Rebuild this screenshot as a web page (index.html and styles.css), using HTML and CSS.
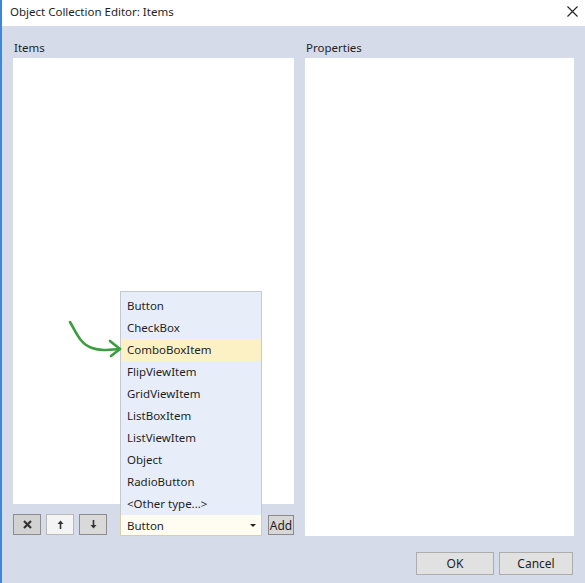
FILE: index.html
```html
<!DOCTYPE html>
<html lang="en">
  <head>
    <meta charset="UTF-8" />
    <title>Object Collection Editor: Items</title>
    <link rel="stylesheet" href="styles.css">
  </head>
  <body>
    <div class="window">
      <div class="titlebar">
        <span class="title">Object Collection Editor: Items</span>
        <svg class="close" width="11" height="11" viewBox="0 0 11 11">
          <path d="M0.5 0.5 L10.5 10.5 M10.5 0.5 L0.5 10.5" stroke="#222" stroke-width="1.1" fill="none" />
        </svg>
      </div>

      <div class="content">
        <div class="panes">
          <div class="pane pane-items">
            <div class="pane-label">Items</div>
            <div class="listbox"></div>

            <div class="toolbar">
              <button class="tool tool-remove" type="button">
                <svg width="9" height="9" viewBox="0 0 9 9">
                  <path d="M1 1 L8 8 M8 1 L1 8" stroke="#333" stroke-width="2.2" fill="none" />
                </svg>
              </button>
              <button class="tool tool-light" type="button">
                <svg width="7" height="9" viewBox="0 0 7 9">
                  <path d="M3.5 9 V2" stroke="#333" stroke-width="1.6" fill="none" />
                  <path d="M0.5 4 L3.5 0.5 L6.5 4 Z" fill="#333" />
                </svg>
              </button>
              <button class="tool" type="button">
                <svg width="7" height="9" viewBox="0 0 7 9">
                  <path d="M3.5 0 V7" stroke="#333" stroke-width="1.6" fill="none" />
                  <path d="M0.5 5 L3.5 8.5 L6.5 5 Z" fill="#333" />
                </svg>
              </button>

              <div class="combo">
                <ul class="dropdown">
                  <li>Button</li>
                  <li>CheckBox</li>
                  <li class="selected">ComboBoxItem</li>
                  <li>FlipViewItem</li>
                  <li>GridViewItem</li>
                  <li>ListBoxItem</li>
                  <li>ListViewItem</li>
                  <li>Object</li>
                  <li>RadioButton</li>
                  <li>&lt;Other type...&gt;</li>
                </ul>
                <span class="combo-value">Button</span>
                <span class="combo-arrow"></span>
              </div>

              <button class="add" type="button">Add</button>
            </div>

            <!-- hand-drawn pointer to the highlighted entry -->
            <svg class="pointer" width="60" height="42" viewBox="0 0 60 42">
              <path d="M4 4 C10 14, 14 26, 26 30 C34 33, 42 32, 54 31" stroke="#3a9d3e" stroke-width="2.6" fill="none" stroke-linecap="round" />
              <path d="M44 23 L54 31 L45 38" stroke="#3a9d3e" stroke-width="2.6" fill="none" stroke-linecap="round" stroke-linejoin="round" />
            </svg>
          </div>

          <div class="pane">
            <div class="pane-label">Properties</div>
            <div class="propgrid"></div>
          </div>
        </div>

        <div class="actions">
          <button class="btn" type="button">OK</button>
          <button class="btn" type="button">Cancel</button>
        </div>
      </div>
    </div>
  </body>
</html>
```

FILE: styles.css
```css
:root {
  --window-bg: #d6dbe9;
  --text-color: #1e1e1e;
  --accent-blue: #3d86d8;
  --list-bg: #e8eef9;
  --list-border: #c6c9cf;
  --hilite: #fcf1c4;
  --btn-bg: #e1e1e1;
  --btn-border: #adadad;
}

* {
  box-sizing: border-box;
}

body {
  margin: 0;
  font-family: "Noto Sans", "Open Sans", sans-serif;
  font-size: 11.5px;
  color: var(--text-color);
  background: var(--window-bg);
}

.window {
  width: 585px;
  height: 583px;
  display: flex;
  flex-direction: column;
  border-left: 2px solid var(--accent-blue);
  overflow: hidden;
}

.titlebar {
  height: 26px;
  flex-shrink: 0;
  background: #fff;
  display: flex;
  align-items: center;
  justify-content: space-between;
  padding: 0 7px 3px 8px;
}

.close {
  display: block;
}

.content {
  flex: 1;
  display: flex;
  flex-direction: column;
  padding: 10px 10px 8px 11px;
}

.panes {
  display: grid;
  grid-template-columns: 281px 270px;
  gap: 11px;
  height: 500px;
}

.pane {
  display: flex;
  flex-direction: column;
  min-height: 0;
}

.pane-items {
  position: relative;
}

.pane-label {
  height: 22px;
  line-height: 24px;
  padding-left: 1px;
}

.listbox,
.propgrid {
  background: #fff;
  flex: 1;
}

.propgrid {
  margin-right: 1px;
}

.toolbar {
  height: 32px;
  flex-shrink: 0;
  display: flex;
  align-items: flex-end;
}

.tool {
  width: 28px;
  height: 21px;
  margin-right: 5px;
  margin-bottom: 1px;
  padding: 0;
  display: flex;
  align-items: center;
  justify-content: center;
  background: #d9d9d9;
  border: 1px solid #8d8d8d;
}

.tool-remove {
  background: #d2d2d2;
}

.tool-light {
  background: #f4f4f4;
  border-color: #b9b9b9;
}

.combo {
  position: relative;
  width: 142px;
  height: 22px;
  margin-left: 8px;
  display: flex;
  align-items: center;
  justify-content: space-between;
  padding: 0 5px 0 6px;
  background: #fffdf1;
  border: 1px solid #d8cfa9;
}

.combo-arrow {
  width: 0;
  height: 0;
  border-left: 3px solid transparent;
  border-right: 3px solid transparent;
  border-top: 3px solid #222;
}

.dropdown {
  position: absolute;
  left: -1px;
  bottom: 100%;
  width: 142px;
  margin: 0;
  padding: 3px 0 0;
  list-style: none;
  background: var(--list-bg);
  border: 1px solid var(--list-border);
  border-bottom: none;
}

.dropdown li {
  height: 22px;
  line-height: 22px;
  padding-left: 6px;
}

.dropdown .selected {
  background: var(--hilite);
}

.add {
  width: 26px;
  height: 20px;
  margin-left: 6px;
  margin-bottom: 1px;
  padding: 0;
  font: inherit;
  font-size: 12px;
  color: var(--text-color);
  background: #d7d7d7;
  border: 1px solid #8a8a8a;
}

.pointer {
  position: absolute;
  left: 53px;
  top: 282px;
}

.actions {
  display: flex;
  justify-content: flex-end;
  gap: 5px;
  margin-top: auto;
  padding-right: 2px;
}

.btn {
  width: 78px;
  height: 23px;
  padding: 0;
  font: inherit;
  font-size: 12px;
  color: var(--text-color);
  background: var(--btn-bg);
  border: 1px solid var(--btn-border);
}

.btn + .btn {
  width: 74px;
}
```
